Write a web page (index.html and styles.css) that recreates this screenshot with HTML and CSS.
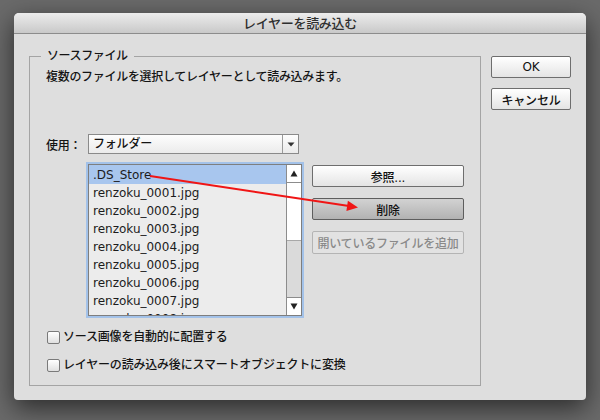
FILE: index.html
```html
<!DOCTYPE html>
<html lang="ja">
<head>
<meta charset="utf-8">
<title>レイヤーを読み込む</title>
<link rel="stylesheet" href="styles.css">
</head>
<body>
<div class="dialog">
  <div class="titlebar">レイヤーを読み込む</div>
  <div class="content">
    <fieldset class="group">
      <legend class="group-title">ソースファイル</legend>
      <p class="desc">複数のファイルを選択してレイヤーとして読み込みます。</p>
      <div class="use-row">
        <span class="use-label">使用：</span>
        <div class="select">
          <span class="select-value">フォルダー</span>
          <span class="select-arrow"><svg width="8" height="5" viewBox="0 0 8 5"><polygon points="0.5,0.5 7.5,0.5 4,4.5" fill="#333"/></svg></span>
        </div>
      </div>
      <div class="list-row">
        <div class="listbox">
          <ul class="items">
            <li class="item sel">.DS_Store</li>
            <li class="item">renzoku_0001.jpg</li>
            <li class="item">renzoku_0002.jpg</li>
            <li class="item">renzoku_0003.jpg</li>
            <li class="item">renzoku_0004.jpg</li>
            <li class="item">renzoku_0005.jpg</li>
            <li class="item">renzoku_0006.jpg</li>
            <li class="item">renzoku_0007.jpg</li>
            <li class="item">renzoku_0008.jpg</li>
          </ul>
          <div class="scrollbar">
            <div class="sb-btn"><svg width="8" height="7" viewBox="0 0 8 7"><polygon points="4,0.5 7.5,6.5 0.5,6.5" fill="#222"/></svg></div>
            <div class="sb-thumb"></div>
            <div class="sb-track"></div>
            <div class="sb-btn sb-down"><svg width="8" height="7" viewBox="0 0 8 7"><polygon points="0.5,0.5 7.5,0.5 4,6.5" fill="#222"/></svg></div>
          </div>
        </div>
        <div class="side-buttons">
          <button class="btn">参照...</button>
          <button class="btn btn-pressed">削除</button>
          <button class="btn btn-disabled">開いているファイルを追加</button>
        </div>
      </div>
      <label class="check"><span class="box"></span><span>ソース画像を自動的に配置する</span></label>
      <label class="check check-2"><span class="box"></span><span>レイヤーの読み込み後にスマートオブジェクトに変換</span></label>
    </fieldset>
    <div class="main-buttons">
      <button class="btn btn-main">OK</button>
      <button class="btn btn-main">キャンセル</button>
    </div>
  </div>
</div>
<svg class="annotation" width="600" height="420" viewBox="0 0 600 420">
  <line x1="150" y1="176" x2="349" y2="206" stroke="#f01515" stroke-width="2"/>
  <polygon points="358,207.5 346.4,211 347.9,200.8" fill="#f01515"/>
</svg>
</body>
</html>
```
FILE: styles.css
```css
html, body {
  margin: 0;
}
body {
  width: 600px;
  height: 420px;
  box-sizing: border-box;
  padding: 13px 14px 0;
  background: #6a6a6a;
  font-family: "DejaVu Sans", "Noto Sans CJK JP", sans-serif;
  font-size: 12px;
  font-weight: 500;
  color: #141414;
  position: relative;
  overflow: hidden;
}
.dialog {
  width: 572px;
  height: 387px;
  background: #dedede;
  border-radius: 5px 5px 4px 4px;
  box-shadow: 0 8px 26px rgba(0, 0, 0, 0.6);
  overflow: hidden;
}
.titlebar {
  height: 20px;
  border-bottom: 1px solid #8c8c8c;
  background: linear-gradient(#ececec, #c9c9c9);
  text-align: center;
  font-size: 13px;
  line-height: 21px;
  color: #2e2e2e;
  letter-spacing: -0.3px;
}
.content {
  display: flex;
  gap: 10px;
  padding: 15px 15px 0;
}
.group {
  margin: 0;
  padding: 6px 15px 12px 16px;
  border: 1px solid #a4a4a4;
  width: 452px;
  box-sizing: border-box;
  min-width: 0;
}
.group-title {
  padding: 0 6px;
  margin-left: -5px;
  line-height: 14px;
  letter-spacing: -0.4px;
}
.desc {
  margin: 0;
  line-height: 16px;
  letter-spacing: -0.3px;
}
.use-row {
  display: flex;
  align-items: center;
  margin-top: 49px;
  height: 20px;
}
.use-label {
  width: 42px;
  letter-spacing: -0.2px;
}
.select {
  width: 211px;
  height: 20px;
  box-sizing: border-box;
  border: 1px solid #8a8a8a;
  background: linear-gradient(#fdfdfd, #ebebeb);
  display: flex;
}
.select-value {
  flex: 1;
  padding-left: 4px;
  line-height: 18px;
  letter-spacing: -0.2px;
}
.select-arrow {
  width: 15px;
  border-left: 1px solid #9a9a9a;
  display: flex;
  align-items: center;
  justify-content: center;
}
.list-row {
  display: flex;
  gap: 10px;
  margin-top: 10px;
  align-items: flex-start;
}
.listbox {
  margin-left: 42px;
  width: 214px;
  height: 152px;
  box-sizing: border-box;
  border: 1px solid #7e7e7e;
  box-shadow: 0 0 0 2px #a3c2e9;
  background: #ececec;
  display: flex;
}
.items {
  flex: 1;
  margin: 0;
  padding: 0;
  list-style: none;
  overflow: hidden;
  font-family: "DejaVu Sans", sans-serif;
  font-size: 12px;
  font-weight: 400;
  color: #1c1c1c;
}
.item {
  height: 18px;
  line-height: 18px;
  padding-left: 4px;
  white-space: nowrap;
}
.item.sel {
  height: 19px;
  line-height: 20px;
  background: #a8c6ee;
}
.scrollbar {
  width: 15px;
  box-sizing: border-box;
  border-left: 1px solid #8c8c8c;
  display: flex;
  flex-direction: column;
  background: #dadada;
}
.sb-btn {
  height: 17px;
  background: #fff;
  border-bottom: 1px solid #8c8c8c;
  display: flex;
  align-items: center;
  justify-content: center;
}
.sb-down {
  border-bottom: 0;
  border-top: 1px solid #8c8c8c;
}
.sb-thumb {
  height: 57px;
  background: #fff;
  border-bottom: 1px solid #a8a8a8;
}
.sb-track {
  flex: 1;
  background: #dadada;
}
.side-buttons {
  display: flex;
  flex-direction: column;
  gap: 11px;
  width: 152px;
  margin-top: 1px;
}
.btn {
  height: 22px;
  box-sizing: border-box;
  border: 1px solid #6e6e6e;
  border-radius: 2px;
  background: linear-gradient(#ffffff, #e4e4e4);
  font-family: "DejaVu Sans", "Noto Sans CJK JP", sans-serif;
  font-size: 12px;
  font-weight: 500;
  color: #111;
  padding: 0;
  letter-spacing: -0.2px;
}
.btn-pressed {
  background: linear-gradient(#d2d2d2, #b2b2b2);
  border-color: #5e5e5e;
}
.btn-disabled {
  height: 23px;
  background: #e2e2e2;
  border-color: #b4b4b4;
  color: #8a8a8a;
}
.main-buttons {
  display: flex;
  flex-direction: column;
  gap: 10px;
  width: 80px;
  margin-top: 7px;
}
.btn-main {
  font-size: 12px;
}
.check {
  display: flex;
  align-items: center;
  gap: 3px;
  line-height: 16px;
  margin-top: 13px;
  letter-spacing: -0.2px;
}
.check-2 {
  margin-top: 12px;
}
.box {
  width: 13px;
  height: 13px;
  box-sizing: border-box;
  margin-left: 1px;
  border: 1px solid #7a7a7a;
  border-radius: 2px;
  background: linear-gradient(#ffffff, #e0e0e0);
  flex: none;
}
.annotation {
  position: absolute;
  left: 0;
  top: 0;
  pointer-events: none;
}
```
